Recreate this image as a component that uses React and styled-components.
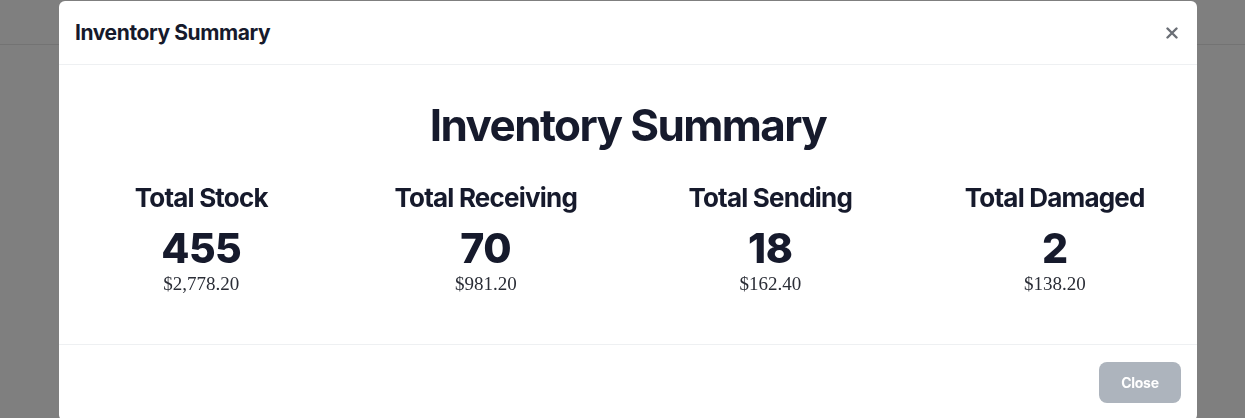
import styled, { createGlobalStyle } from "styled-components";

const stats = [
  { id: "stock", label: "Total Stock", count: 455, value: "$2,778.20" },
  { id: "receiving", label: "Total Receiving", count: 70, value: "$981.20" },
  { id: "sending", label: "Total Sending", count: 18, value: "$162.40" },
  { id: "damaged", label: "Total Damaged", count: 2, value: "$138.20" },
];

const GlobalStyle = createGlobalStyle`
  html, body {
    margin: 0;
    padding: 0;
    height: 100%;
    background: #ffffff;
  }
  body {
    font-family: Inter, "Open Sans", sans-serif;
    overflow: hidden;
  }
`;

const Page = styled.div`
  height: 418px;
  display: flex;
  flex-direction: column;
`;

const PageHeader = styled.header`
  height: 44px;
  border-bottom: 1px solid #e6e6e6;
  background: #ffffff;
`;

const Backdrop = styled.div`
  position: fixed;
  inset: 0;
  background: rgba(0, 0, 0, 0.5);
  display: flex;
  justify-content: center;
  align-items: flex-start;
  padding: 1px 0 0 11px;
`;

const Dialog = styled.div`
  width: 1138px;
  background: #ffffff;
  border-radius: 6px;
  color: #161a2c;
  display: flex;
  flex-direction: column;
`;

const DialogHeader = styled.div`
  height: 63px;
  padding: 0 13px 0 16px;
  display: flex;
  align-items: center;
  justify-content: space-between;
  border-bottom: 1px solid #eef0f2;
`;

const DialogTitle = styled.h5`
  margin: 0;
  font-size: 21px;
  font-weight: 700;
  letter-spacing: -0.4px;
`;

const CloseIcon = styled.button`
  border: 0;
  background: none;
  padding: 0;
  width: 24px;
  height: 24px;
  display: flex;
  align-items: center;
  justify-content: center;
  color: #6b6f76;
  cursor: pointer;
`;

const DialogBody = styled.div`
  height: 280px;
  padding-top: 35px;
  box-sizing: border-box;
  border-bottom: 1px solid #eef0f2;
  text-align: center;
`;

const Heading = styled.h1`
  margin: 0 0 33px;
  font-size: 44px;
  line-height: 50px;
  font-weight: 700;
  letter-spacing: -1.6px;
`;

const StatGrid = styled.div`
  display: grid;
  grid-template-columns: repeat(4, 1fr);
`;

const Stat = styled.div`
  display: flex;
  flex-direction: column;
  align-items: center;
`;

const StatLabel = styled.h3`
  margin: 0;
  font-size: 26px;
  line-height: 30px;
  font-weight: 700;
  letter-spacing: -0.8px;
`;

const StatCount = styled.div`
  margin-top: 15px;
  font-size: 41px;
  line-height: 40px;
  font-weight: 800;
  letter-spacing: -0.5px;
`;

const StatValue = styled.div`
  margin-top: 6px;
  font-family: "Liberation Serif", "DejaVu Serif", serif;
  font-size: 19px;
  line-height: 20px;
  color: #2a2d36;
`;

const DialogFooter = styled.div`
  height: 76px;
  padding: 17px 16px 0;
  box-sizing: border-box;
  display: flex;
  justify-content: flex-end;
  align-items: flex-start;
`;

const Button = styled.button`
  width: 82px;
  height: 41px;
  border: 0;
  border-radius: 8px;
  background: ${(p) => (p.$muted ? "#adb4bd" : "#161a2c")};
  color: #ffffff;
  font-family: Inter, sans-serif;
  font-size: 14px;
  font-weight: 700;
  letter-spacing: -0.3px;
  cursor: pointer;
`;

const App = () => {
  return (
    <>
      <GlobalStyle />
      <Page>
        <PageHeader />
      </Page>

      {/* inventory summary modal */}
      <Backdrop>
        <Dialog>
          <DialogHeader>
            <DialogTitle>Inventory Summary</DialogTitle>
            <CloseIcon aria-label="close">
              <svg width="12" height="12" viewBox="0 0 12 12">
                <path
                  d="M1.5 1.5 L10.5 10.5 M10.5 1.5 L1.5 10.5"
                  stroke="currentColor"
                  strokeWidth="2.4"
                  strokeLinecap="round"
                />
              </svg>
            </CloseIcon>
          </DialogHeader>

          <DialogBody>
            <Heading>Inventory Summary</Heading>
            <StatGrid>
              {stats.map(({ id, label, count, value }) => (
                <Stat key={id}>
                  <StatLabel>{label}</StatLabel>
                  <StatCount>{count}</StatCount>
                  <StatValue>{value}</StatValue>
                </Stat>
              ))}
            </StatGrid>
          </DialogBody>

          <DialogFooter>
            <Button $muted>Close</Button>
          </DialogFooter>
        </Dialog>
      </Backdrop>
    </>
  );
};

export default App;
